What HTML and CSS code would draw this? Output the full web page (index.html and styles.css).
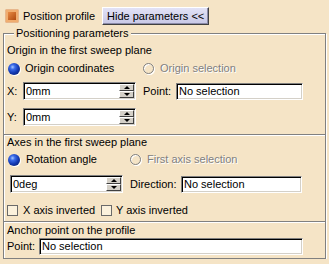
FILE: index.html
```html
<!DOCTYPE html>
<html lang="en">
<head>
    <meta charset="UTF-8">
    <title>Position profile</title>
    <link rel="stylesheet" href="styles.css">
</head>
<body>
    <div class="top">
        <span class="toggle"></span>
        <span class="top-label">Position profile</span>
        <button class="hide-btn">Hide parameters &lt;&lt;</button>
    </div>

    <div class="group">
        <div class="legend">Positioning parameters</div>

        <div class="section sec-origin">
            <div class="title">Origin in the first sweep plane</div>
            <div class="row opts">
                <span class="opt opt-origin"><span class="radio"></span>Origin coordinates</span>
                <span class="opt off"><span class="radio-off"></span>Origin selection</span>
            </div>
            <div class="row row-x">
                <span class="lbl lbl-xy">X:</span>
                <div class="field spin-field w-xy"><span class="val">0mm</span><span class="spin"><i class="up"></i><i class="down"></i></span></div>
                <span class="lbl lbl-point">Point:</span>
                <div class="field w-point"><span class="val">No selection</span></div>
            </div>
            <div class="row row-y">
                <span class="lbl lbl-xy">Y:</span>
                <div class="field spin-field w-xy"><span class="val">0mm</span><span class="spin"><i class="up"></i><i class="down"></i></span></div>
            </div>
        </div>

        <div class="section sec-axes">
            <div class="title">Axes in the first sweep plane</div>
            <div class="row opts">
                <span class="opt opt-axes"><span class="radio"></span>Rotation angle</span>
                <span class="opt off"><span class="radio-off"></span>First axis selection</span>
            </div>
            <div class="row row-angle">
                <div class="field spin-field w-angle"><span class="val">0deg</span><span class="spin"><i class="up"></i><i class="down"></i></span></div>
                <span class="lbl lbl-dir">Direction:</span>
                <div class="field w-dir"><span class="val">No selection</span></div>
            </div>
            <div class="row checks">
                <span class="opt opt-check"><span class="check"></span>X axis inverted</span>
                <span class="opt opt-check2"><span class="check"></span>Y axis inverted</span>
            </div>
        </div>

        <div class="section sec-anchor">
            <div class="title">Anchor point on the profile</div>
            <div class="row row-anchor">
                <span class="lbl lbl-anchor">Point:</span>
                <div class="field w-anchor"><span class="val">No selection</span></div>
            </div>
        </div>
    </div>
</body>
</html>
```

FILE: styles.css
```css
body {
    margin: 0;
    background-color: #f5e4c6;
    font-family: "Liberation Sans", Arial, sans-serif;
    font-size: 11px;
    line-height: 13px;
    color: #000;
}

/* top bar */
.top {
    display: flex;
    align-items: center;
    padding: 7px 0 2px 6px;
}
.toggle {
    width: 12px;
    height: 12px;
    box-sizing: border-box;
    border: 2px solid #f0ad70;
    background: linear-gradient(135deg, #e88a44, #b04a10);
    box-shadow: 0 0 0 0.5px #d88850;
}
.top-label {
    margin-left: 5px;
}
.hide-btn {
    margin-left: 7px;
    width: 107px;
    height: 18px;
    padding: 0;
    font: inherit;
    color: #000;
    background: linear-gradient(#e2e2f6, #c8c8e6);
    border: 1px solid;
    border-color: #fff #404040 #404040 #fff;
    box-shadow: inset -1px -1px 0 #8a8aa8;
}

/* group box */
.group {
    margin: 6px 3px 0;
    border: 1px solid #808080;
    box-shadow: inset 1px 1px 0 #fff, 1px 1px 0 #fff;
}
.legend {
    width: max-content;
    margin: -7px 0 0 10px;
    padding: 0 2px;
    background-color: #f5e4c6;
}
.section {
    padding-left: 3px;
}
.section + .section {
    border-top: 1px solid #808080;
    box-shadow: inset 0 1px 0 #fff;
}
.sec-origin { padding-top: 4px; padding-bottom: 8px; }
.sec-axes { padding-top: 1px; padding-bottom: 4px; }
.sec-anchor { padding-top: 2px; padding-bottom: 3px; }

.row {
    display: flex;
    align-items: center;
}
.opt {
    display: flex;
    align-items: center;
    gap: 5px;
}
.off {
    color: #808080;
    text-shadow: 1px 1px 0 #fff;
    gap: 6px;
}

.sec-origin .opts { margin-top: 5px; }
.opt-origin { width: 135px; margin-left: 1px; }
.row-x { margin-top: 7px; }
.row-y { margin-top: 8px; }

.sec-axes .opts { margin-top: 4px; }
.opt-axes { width: 122px; margin-left: 1px; gap: 6px; }
.row-angle { margin-top: 9px; }
.checks { margin-top: 11px; }
.opt-check { width: 94px; }
.opt-check2 { gap: 4px; }

.row-anchor { margin-top: 1px; }

/* radio buttons and check boxes */
.radio {
    width: 12px;
    height: 12px;
    border-radius: 50%;
    background: radial-gradient(circle at 38% 34%, #a8c8ff 0, #3a6ae8 22%, #1338b0 55%, #071a60 100%);
    box-shadow: 1px 1px 0 #fff;
}
.radio-off {
    width: 11px;
    height: 11px;
    box-sizing: border-box;
    border: 1px solid #808080;
    border-radius: 50%;
    box-shadow: 1px 1px 0 #fff, inset 1px 1px 0 #fff;
}
.check {
    width: 11px;
    height: 11px;
    box-sizing: border-box;
    border: 1px solid #6a6a6a;
    background-color: #fbf1dc;
}

/* labels */
.lbl-xy { width: 16px; }
.lbl-point { width: 33px; margin-left: 7px; }
.lbl-dir { width: 51px; margin-left: 7px; }
.lbl-anchor { width: 32px; }

/* text fields */
.field {
    display: flex;
    align-items: center;
    box-sizing: border-box;
    height: 17px;
    background-color: #fff;
    border: 1px solid;
    border-color: #808080 #fff #fff #808080;
    box-shadow: inset 1px 1px 0 #000, inset -1px -1px 0 #d4d0c8;
}
.spin-field {
    height: 18px;
}
.val {
    padding-left: 2px;
    white-space: nowrap;
}
.w-xy { width: 113px; }
.w-point { width: 127px; }
.w-angle { width: 113px; margin-left: 3px; }
.w-dir { width: 121px; }
.w-anchor { width: 264px; }

.spin {
    display: flex;
    flex-direction: column;
    width: 15px;
    height: 14px;
    margin: 1px 1px 1px auto;
}
.spin i {
    flex: 1;
    display: flex;
    align-items: center;
    justify-content: center;
    box-sizing: border-box;
    background-color: #d4d0c8;
    border: 1px solid;
    border-color: #fff #404040 #404040 #fff;
}
.spin i::before {
    content: "";
    width: 0;
    height: 0;
    border-left: 3px solid transparent;
    border-right: 3px solid transparent;
}
.spin .up::before {
    border-bottom: 3px solid #000;
}
.spin .down::before {
    border-top: 3px solid #000;
}
```
